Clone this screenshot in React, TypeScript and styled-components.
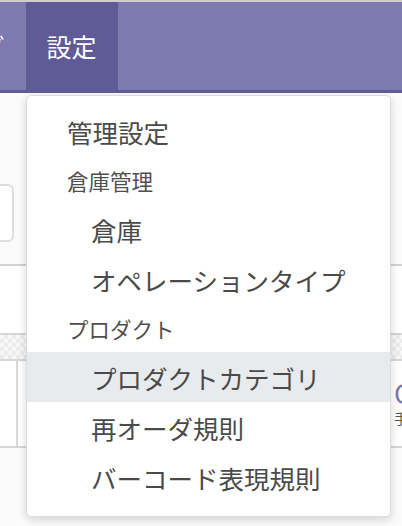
import React from 'react';
import styled, {createGlobalStyle} from "styled-components";

const GlobalStyle = createGlobalStyle`
  body {
    margin: 0;
    background: #f9f9f9;
    font-family: "Noto Sans CJK JP", "Noto Sans", sans-serif;
    overflow: hidden;
  }
`

type Entry = { label: string; kind: 'top' | 'header' | 'item'; active?: boolean }

const entries: Entry[] = [
    {label: '管理設定', kind: 'top'},
    {label: '倉庫管理', kind: 'header'},
    {label: '倉庫', kind: 'item'},
    {label: 'オペレーションタイプ', kind: 'item'},
    {label: 'プロダクト', kind: 'header'},
    {label: 'プロダクトカテゴリ', kind: 'item', active: true},
    {label: '再オーダ規則', kind: 'item'},
    {label: 'バーコード表現規則', kind: 'item'},
]

export default function App() {
    return (
        <Page>
            <GlobalStyle/>
            <TopLine/>
            <NavBar>
                <NavItem>レポーティング</NavItem>
                <NavItem $active>設定</NavItem>
                <Dropdown>
                    {entries.map((e) =>
                        e.kind === 'header'
                            ? <MenuHeader key={e.label}>{e.label}</MenuHeader>
                            : <MenuItem key={e.label} $indent={e.kind === 'item'} $active={e.active}>{e.label}</MenuItem>
                    )}
                </Dropdown>
            </NavBar>
            <ControlPanel>
                <SearchBox/>
            </ControlPanel>
            <Spacer/>
            <TableHead/>
            <TableRow>
                <HandleCell/>
                <MainCell/>
                <RecordCell>
                    <RecordName>Cable</RecordName>
                    <RecordSub>手配済み</RecordSub>
                </RecordCell>
            </TableRow>
        </Page>
    );
}

const Page = styled.div`
  width: 402px;
  height: 526px;
  background: #fbfbfb;
  overflow: hidden;
`

const TopLine = styled.div`
  height: 2px;
  background: #cfcfcf;
`

const NavBar = styled.nav`
  position: relative;
  display: flex;
  height: 88px;
  background: #7c7aae;
  border-bottom: 3px solid #5f5c98;
  margin-left: -190px;
`

const NavItem = styled.div<{ $active?: boolean }>`
  display: flex;
  align-items: center;
  padding: 0 21px;
  font-size: 25px;
  color: #fff;
  white-space: nowrap;
  background: ${p => p.$active ? '#5e5b97' : 'transparent'};
`

const Dropdown = styled.div`
  position: absolute;
  top: 93px;
  left: 216px;
  width: 363px;
  padding: 10px 0 14px;
  background: #fff;
  border: 1px solid #dcdcdc;
  border-radius: 5px;
  box-shadow: 0 3px 10px rgba(0, 0, 0, 0.16);
  z-index: 10;
`

const MenuItem = styled.div<{ $indent?: boolean; $active?: boolean }>`
  height: 50px;
  display: flex;
  align-items: center;
  padding-left: ${p => p.$indent ? 64 : 40}px;
  font-size: 25.5px;
  color: #4a4a4a;
  white-space: nowrap;
  background: ${p => p.$active ? '#e8ebee' : 'transparent'};
`

const MenuHeader = styled.div`
  height: 48px;
  display: flex;
  align-items: center;
  padding-left: 40px;
  font-size: 21.5px;
  color: #4f4f4f;
  white-space: nowrap;
`

const ControlPanel = styled.div`
  height: 173px;
  display: flex;
  align-items: flex-end;
  padding-bottom: 22px;
  border-bottom: 2px solid #d2d2d2;
  box-sizing: border-box;
`

const SearchBox = styled.div`
  width: 40px;
  height: 58px;
  margin-left: -26px;
  border: 2px solid #dedede;
  border-radius: 6px;
  background: #fff;
  box-sizing: border-box;
`

const Spacer = styled.div`
  height: 67px;
  background: #fff;
`

const TableHead = styled.div`
  height: 24px;
  border-top: 2px solid #d6d6d6;
  border-bottom: 2px solid #d6d6d6;
  background: repeating-conic-gradient(#ececec 0 25%, #f7f7f7 0 50%) 0 0 / 8px 8px;
`

const TableRow = styled.div`
  display: flex;
  height: 85px;
  border-bottom: 2px solid #d6d6d6;
  background: #fff;
`

const HandleCell = styled.div`
  width: 16px;
  border-right: 2px solid #d8d8d8;
`

const MainCell = styled.div`
  flex: 1;
`

const RecordCell = styled.div`
  width: 8px;
  padding-top: 18px;
  display: flex;
  flex-direction: column;
  gap: 4px;
  overflow: hidden;
  white-space: nowrap;
`

const RecordName = styled.div`
  font-size: 27px;
  line-height: 27px;
  color: #7c7aae;
`

const RecordSub = styled.div`
  font-size: 14px;
  line-height: 16px;
  color: #555;
`
